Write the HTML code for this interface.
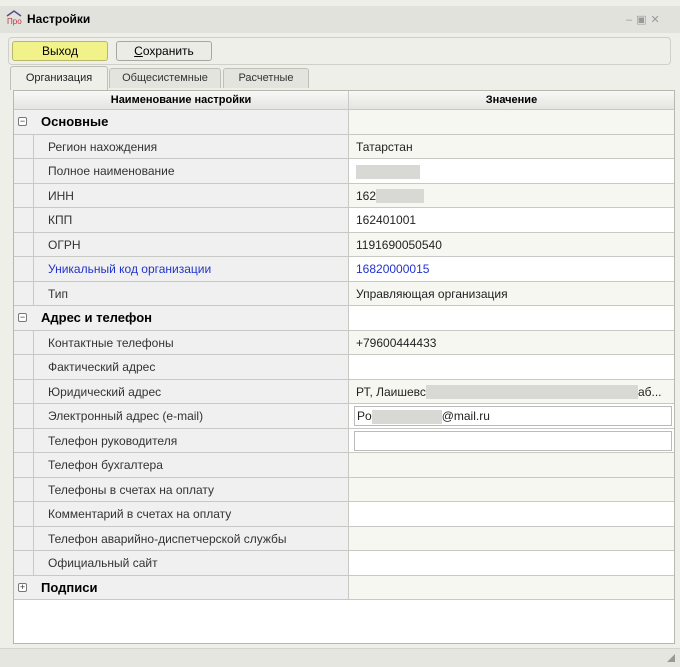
<!DOCTYPE html>
<html><head><meta charset="utf-8"><style>
*{box-sizing:border-box;margin:0;padding:0}
body{width:680px;height:667px;background:#efefe9;font-family:"Liberation Sans","DejaVu Sans",sans-serif;font-size:12px;color:#000;position:relative;overflow:hidden}
.a{position:absolute}
.title{left:0;top:6px;width:680px;height:27px;background:#e2e2dd}
.btn{height:20px;border:1px solid #a8a8a0;border-radius:3px;text-align:center;line-height:18px;font-size:12px}
.tab{top:68px;height:20px;border:1px solid #c0c0b8;border-bottom:none;border-radius:3px 3px 0 0;background:#e4e4de;text-align:center;line-height:19px;font-size:11px;color:#333}
.grid{left:13px;top:90px;width:662px;height:554px;border:1px solid #b8b8b0;background:#fff}
.row{position:absolute;left:0;width:660px;height:24.5px;border-bottom:1px solid #c8c8c4}
.l{position:absolute;left:0;top:0;width:335px;height:100%;background:#f0f0f0;border-right:1px solid #c8c8c4}
.ind{position:absolute;left:19px;top:0;width:316px;height:100%;border-left:1px solid #c8c8c4;padding-left:14px;line-height:25px;font-size:12px;color:#333}
.v{position:absolute;left:335px;top:0;width:325px;height:100%;padding-left:7px;line-height:25px;font-size:12px;color:#222}
.c{background:#f7f7f1}.w{background:#fff}
.g .l{font-weight:bold;font-size:13px;line-height:24px;padding-left:27px}
.ic{position:absolute;left:4px;top:7px;width:9px;height:9px;border:1px solid #777;border-radius:2px;font-size:9px;line-height:7px;text-align:center;font-weight:normal;color:#333;background:#fff}
.blur{display:inline-block;background:#d8d8d5;height:14px;vertical-align:middle}
.inp{position:absolute;left:5px;top:2px;width:318px;height:20px;border:1px solid #bbb;background:#fff;padding-left:2px;line-height:18px}
</style></head><body>
<div class="a title"></div>
<div class="a" style="left:6px;top:10px;width:16px;height:16px">
<svg width="16" height="16"><path d="M1 6 L8 1 L15 6" stroke="#5a4a8a" fill="none" stroke-width="1.5"/><text x="1" y="14" font-size="8" fill="#c03040" font-family="Liberation Sans">Про</text></svg></div>
<div class="a" style="left:27px;top:12px;font-weight:bold;font-size:12px">Настройки</div>
<div class="a" style="left:626px;top:13px;color:#999;font-size:11px;letter-spacing:4px">–▣✕</div>
<div class="a" style="left:8px;top:37px;width:328px;height:28px;border:1px solid #d0d0c8;border-right:none;border-radius:4px 0 0 4px"></div>
<div class="a" style="left:336px;top:37px;width:335px;height:28px;border:1px solid #d0d0c8;border-left:none;border-radius:0 4px 4px 0"></div>
<div class="a btn" style="left:12px;top:41px;width:96px;background:#f2f28a;border-color:#b8b868">Выход</div>
<div class="a btn" style="left:116px;top:41px;width:96px;background:#ecece6"><u>С</u>охранить</div>
<div class="a tab" style="left:10px;top:66px;width:98px;height:24px;background:#efefe9;color:#222;line-height:22px">Организация</div>
<div class="a tab" style="left:109px;width:112px">Общесистемные</div>
<div class="a tab" style="left:223px;width:86px">Расчетные</div>
<div class="a grid">
<div class="row" style="top:0;height:19px;background:linear-gradient(#f8f8f6,#e4e4e0)"><div style="position:absolute;left:0;width:335px;height:18px;border-right:1px solid #c8c8c4;text-align:center;font-weight:bold;font-size:11px;line-height:18px">Наименование настройки</div><div style="position:absolute;left:335px;width:325px;text-align:center;font-weight:bold;font-size:11px;line-height:18px">Значение</div></div>
<div class="row g" style="top:19px"><div class="l"><span class="ic">−</span>Основные</div><div class="v c"></div></div>
<div class="row" style="top:43.5px"><div class="l"><div class="ind">Регион нахождения</div></div><div class="v c">Татарстан</div></div>
<div class="row" style="top:68px"><div class="l"><div class="ind">Полное наименование</div></div><div class="v w"><span class="blur" style="width:64px"></span></div></div>
<div class="row" style="top:92.5px"><div class="l"><div class="ind">ИНН</div></div><div class="v c">162<span class="blur" style="width:48px"></span></div></div>
<div class="row" style="top:117px"><div class="l"><div class="ind">КПП</div></div><div class="v w">162401001</div></div>
<div class="row" style="top:141.5px"><div class="l"><div class="ind">ОГРН</div></div><div class="v c">1191690050540</div></div>
<div class="row" style="top:166px"><div class="l"><div class="ind" style="color:#2233cc">Уникальный код организации</div></div><div class="v w" style="color:#2233cc">16820000015</div></div>
<div class="row" style="top:190.5px"><div class="l"><div class="ind">Тип</div></div><div class="v c">Управляющая организация</div></div>
<div class="row g" style="top:215px"><div class="l"><span class="ic">−</span>Адрес и телефон</div><div class="v w"></div></div>
<div class="row" style="top:239.5px"><div class="l"><div class="ind">Контактные телефоны</div></div><div class="v c">+79600444433</div></div>
<div class="row" style="top:264px"><div class="l"><div class="ind">Фактический адрес</div></div><div class="v w"></div></div>
<div class="row" style="top:288.5px"><div class="l"><div class="ind">Юридический адрес</div></div><div class="v c">РТ, Лаишевс<span class="blur" style="width:212px"></span>аб...</div></div>
<div class="row" style="top:313px"><div class="l"><div class="ind">Электронный адрес (e-mail)</div></div><div class="v w"><div class="inp">Po<span class="blur" style="width:70px"></span>@mail.ru</div></div></div>
<div class="row" style="top:337.5px"><div class="l"><div class="ind">Телефон руководителя</div></div><div class="v w"><div class="inp"></div></div></div>
<div class="row" style="top:362px"><div class="l"><div class="ind">Телефон бухгалтера</div></div><div class="v c"></div></div>
<div class="row" style="top:386.5px"><div class="l"><div class="ind">Телефоны в счетах на оплату</div></div><div class="v c"></div></div>
<div class="row" style="top:411px"><div class="l"><div class="ind">Комментарий в счетах на оплату</div></div><div class="v w"></div></div>
<div class="row" style="top:435.5px"><div class="l"><div class="ind">Телефон аварийно-диспетчерской службы</div></div><div class="v c"></div></div>
<div class="row" style="top:460px"><div class="l"><div class="ind">Официальный сайт</div></div><div class="v w"></div></div>
<div class="row g" style="top:484.5px"><div class="l"><span class="ic">+</span>Подписи</div><div class="v c"></div></div>
</div>
<div class="a" style="left:0;top:648px;width:680px;height:19px;background:#e6e6e0;border-top:1px solid #d4d4ce"></div>
<div class="a" style="left:667px;top:654px;width:0;height:0;border-left:8px solid transparent;border-bottom:8px solid #999"></div>
</body></html>
